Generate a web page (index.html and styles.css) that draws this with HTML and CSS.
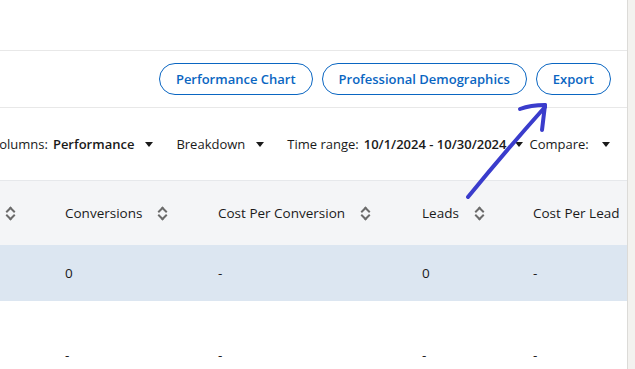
FILE: index.html
```html
<!DOCTYPE html>
<html lang="en">
<head>
    <meta charset="UTF-8">
    <meta name="viewport" content="width=device-width, initial-scale=1.0">
    <title>Campaign Performance</title>
    <link rel="stylesheet" href="styles.css">
</head>
<body>
    <div class="page">
        <div class="top-space"></div>

        <!-- 按钮栏 -->
        <div class="actions">
            <button class="pill-btn">Performance Chart</button>
            <button class="pill-btn">Professional Demographics</button>
            <button class="pill-btn">Export</button>
        </div>

        <!-- 筛选栏 -->
        <div class="filters">
            <div class="filter first">
                <span class="label">Columns:</span>
                <span class="value">Performance</span>
                <span class="caret"></span>
            </div>
            <div class="filter">
                <span class="label">Breakdown</span>
                <span class="caret"></span>
            </div>
            <div class="filter">
                <span class="label">Time range:</span>
                <span class="value">10/1/2024 - 10/30/2024</span>
                <span class="caret tight"></span>
            </div>
            <div class="filter compare">
                <span class="label">Compare:</span>
                <span class="caret wide"></span>
            </div>
        </div>

        <!-- 表格 -->
        <div class="table">
            <div class="th edge"><i class="sort"></i></div>
            <div class="th"><span>Conversions</span><i class="sort"></i></div>
            <div class="th"><span>Cost Per Conversion</span><i class="sort"></i></div>
            <div class="th"><span>Leads</span><i class="sort"></i></div>
            <div class="th"><span>Cost Per Lead</span></div>

            <div class="td hl"></div>
            <div class="td hl">0</div>
            <div class="td hl">-</div>
            <div class="td hl">0</div>
            <div class="td hl">-</div>

            <div class="td tall"></div>
            <div class="td tall">-</div>
            <div class="td tall">-</div>
            <div class="td tall">-</div>
            <div class="td tall">-</div>
        </div>
    </div>

    <!-- 手绘箭头标注 -->
    <svg class="annotation" width="635" height="369" viewBox="0 0 635 369">
        <g fill="none" stroke="#3a3ccc" stroke-width="4" stroke-linecap="round" stroke-linejoin="round">
            <path d="M468 197 C490 170 520 135 545 107"/>
            <path d="M520 109 C528 106 537 105 545 105"/>
            <path d="M545 105 C544 113 543 122 542 130"/>
        </g>
    </svg>
</body>
</html>
```

FILE: styles.css
```css
body {
    margin: 0;
    background: #f3f2ef;
    font-family: "Open Sans", "Liberation Sans", sans-serif;
    font-size: 13px;
    color: #1a1a1a;
    overflow: hidden;
}

.page {
    width: 627px;
    height: 369px;
    background: #fff;
    border-right: 1px solid #dcdbd8;
    overflow: hidden;
}

.top-space {
    height: 50px;
    border-bottom: 1px solid #e8e8e8;
}

.actions {
    display: flex;
    justify-content: flex-end;
    gap: 9px;
    padding: 12px 16px 12px 0;
    border-bottom: 1px solid #e8e8e8;
}

.pill-btn {
    height: 32px;
    padding: 0 16px;
    border: 1px solid #0a66c2;
    border-radius: 16px;
    background: #fff;
    color: #0a66c2;
    font-family: "Open Sans", "Liberation Sans", sans-serif;
    font-size: 13px;
    font-weight: 600;
}

.filters {
    display: flex;
    align-items: center;
    gap: 23px;
    height: 72px;
    border-bottom: 1px solid #e6e8eb;
}

.filter {
    display: flex;
    align-items: center;
    white-space: nowrap;
}
.filter.first {
    margin-left: -9px;
}
.filter.compare {
    margin-left: -17px;
}
.filter .value {
    font-weight: 600;
    margin-left: 5px;
}

.caret {
    width: 0;
    height: 0;
    margin-left: 11px;
    border-left: 4px solid transparent;
    border-right: 4px solid transparent;
    border-top: 5px solid #1a1a1a;
}
.caret.tight {
    margin-left: 9px;
}
.caret.wide {
    margin-left: 13px;
}

.table {
    display: grid;
    grid-template-columns: 49px 153px 204px 111px 1fr;
    font-size: 13.5px;
}

.th {
    display: flex;
    align-items: center;
    height: 64px;
    padding-left: 16px;
    background: #f4f5f7;
    white-space: nowrap;
}
.th.edge {
    padding-left: 6px;
}
.th.edge .sort {
    margin-left: 0;
}

.sort {
    position: relative;
    width: 9px;
    height: 13px;
    margin-left: 16px;
}
.sort:before,
.sort:after {
    content: "";
    position: absolute;
    left: 1px;
    width: 5px;
    height: 5px;
    border-left: 2px solid #6b6b6b;
    border-top: 2px solid #6b6b6b;
}
.sort:before {
    top: 1px;
    transform: rotate(45deg);
}
.sort:after {
    bottom: 1px;
    transform: rotate(225deg);
}

.td {
    display: flex;
    align-items: center;
    padding-left: 16px;
    height: 56px;
}
.td.hl {
    background: #dce6f1;
}
.td.tall {
    height: 108px;
}

.annotation {
    position: absolute;
    top: 0;
    left: 0;
    pointer-events: none;
}
```
